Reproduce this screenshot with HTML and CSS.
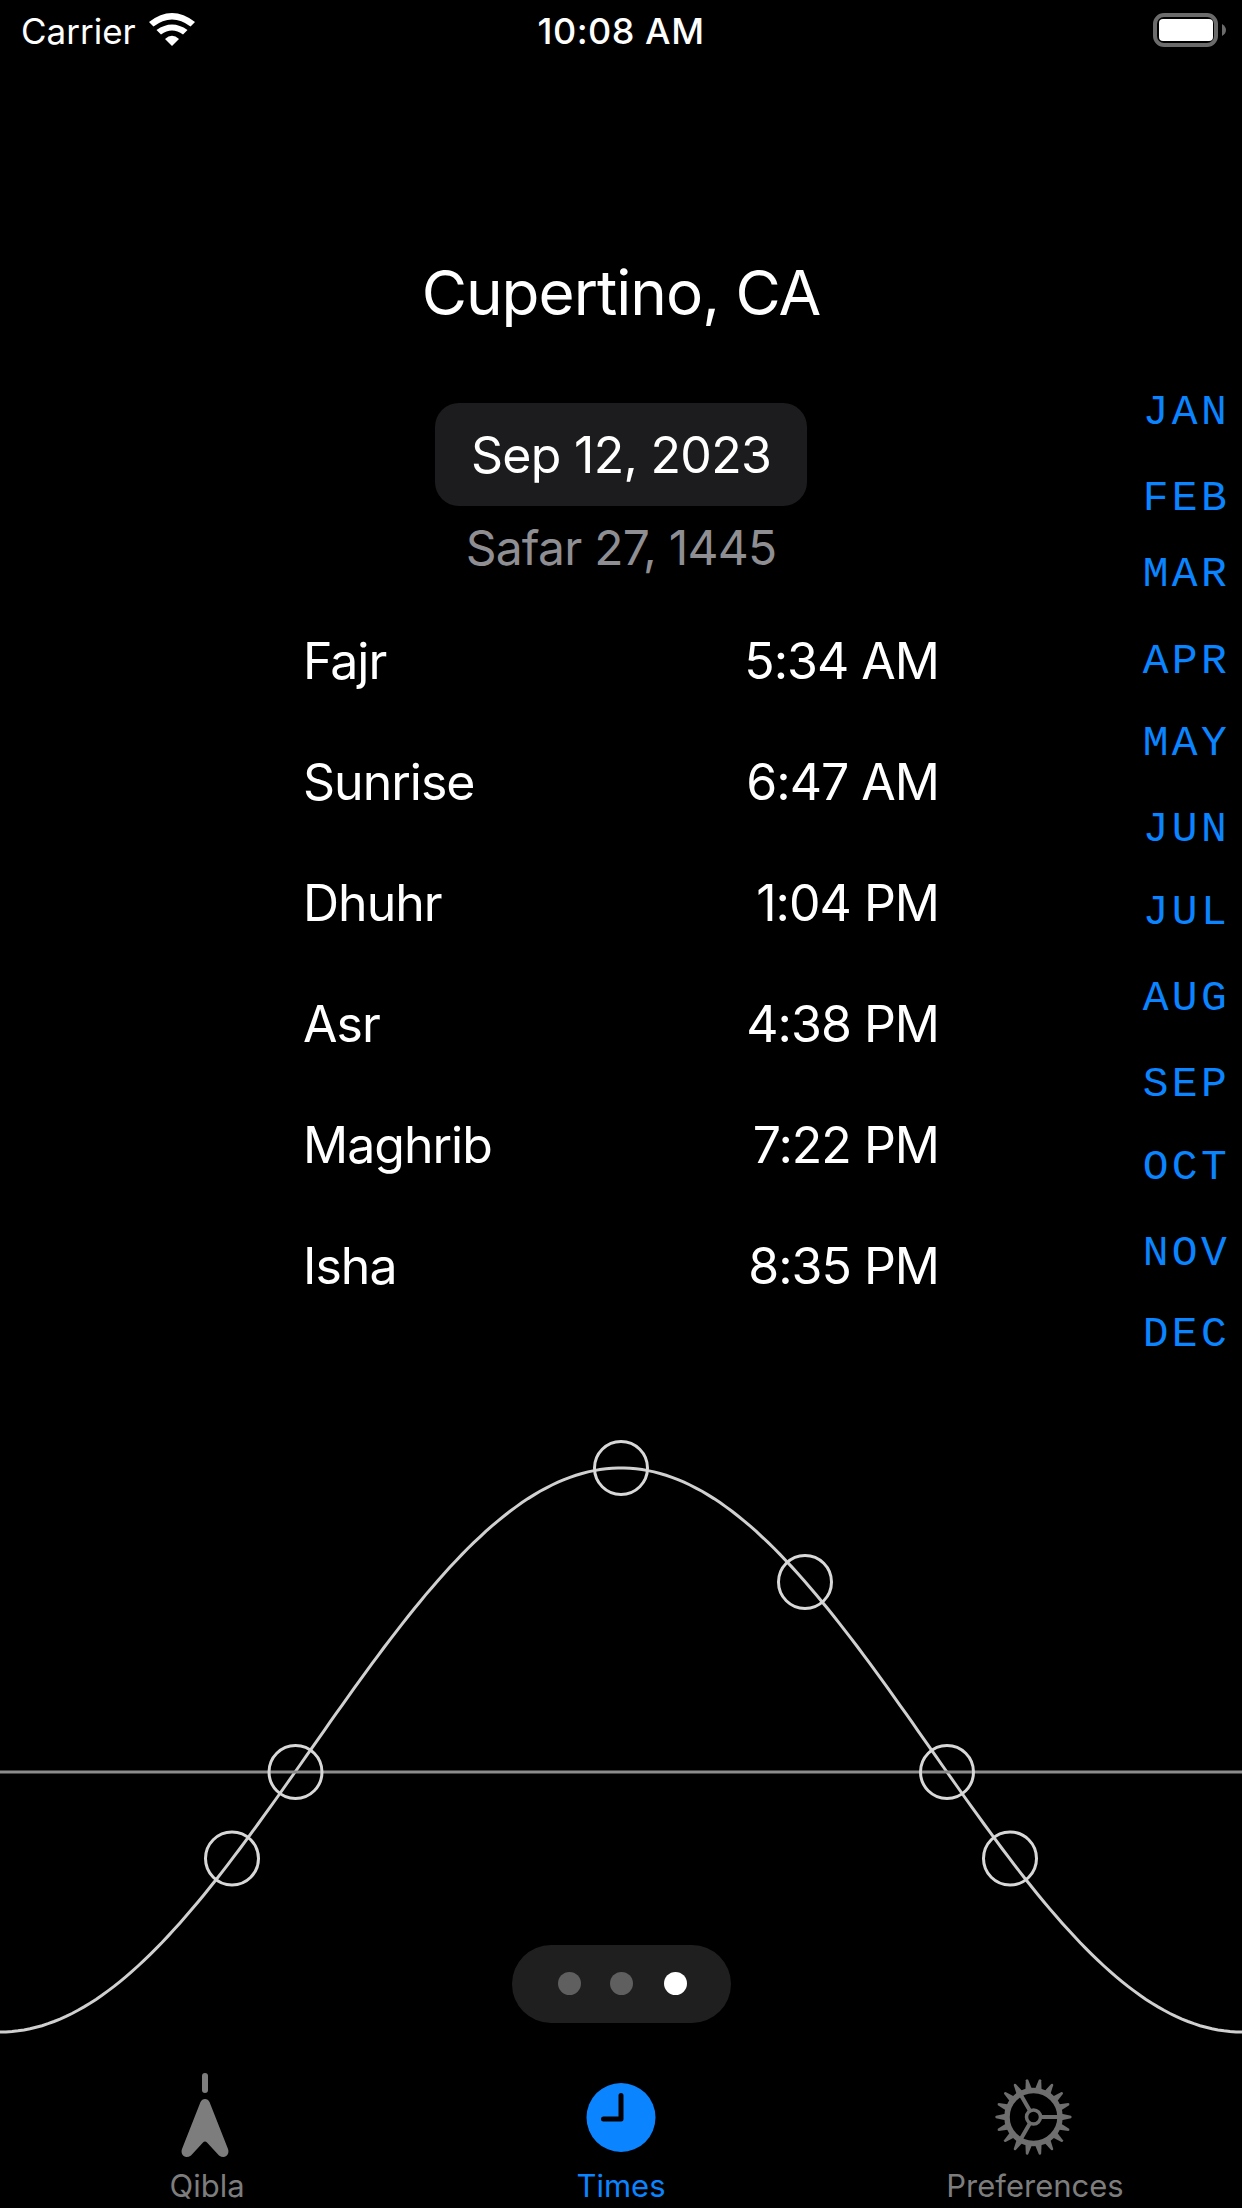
FILE: index.html
```html
<html>
	<head>
		<title>Times</title>
		<link rel="stylesheet" href="styles.css">
	</head>
	<body>
		<div id="screen">
			<div id="status">
				<div class="statusLeft">
					<span>Carrier</span>
					<svg class="statusIcon" width="46" height="34" viewBox="0 0 46 34">
						<path d="M0 9Q23 -9 46 9L41.5 13.5Q23 -0.5 4.5 13.5Z" fill="#fff"/>
						<path d="M7.5 17Q23 6 38.5 17L34 21.5Q23 13.5 12 21.5Z" fill="#fff"/>
						<path d="M16 26Q23 19.5 30 26L23 33Z" fill="#fff"/>
					</svg>
				</div>
				<div class="statusTime">10:08 AM</div>
				<div class="statusRight">
					<svg class="statusIcon" width="73" height="34" viewBox="0 0 73 34">
						<rect x="2" y="2" width="61" height="30" rx="9" fill="none" stroke="#6b6b6b" stroke-width="4"/>
						<rect x="6" y="6" width="54" height="22" rx="4" fill="#fff"/>
						<path d="M69 11C71.5 12.5 73 14.5 73 17S71.5 21.5 69 23Z" fill="#6b6b6b"/>
					</svg>
				</div>
			</div>

			<div id="title">Cupertino, CA</div>
			<div id="datePill">Sep 12, 2023</div>
			<div id="hijri">Safar 27, 1445</div>

			<div id="times">
				<div class="row"><span>Fajr</span><span>5:34 AM</span></div>
				<div class="row"><span>Sunrise</span><span>6:47 AM</span></div>
				<div class="row"><span>Dhuhr</span><span>1:04 PM</span></div>
				<div class="row"><span>Asr</span><span>4:38 PM</span></div>
				<div class="row"><span>Maghrib</span><span>7:22 PM</span></div>
				<div class="row"><span>Isha</span><span>8:35 PM</span></div>
			</div>

			<div id="months">
				<div>JAN</div>
				<div>FEB</div>
				<div>MAR</div>
				<div>APR</div>
				<div>MAY</div>
				<div>JUN</div>
				<div>JUL</div>
				<div>AUG</div>
				<div>SEP</div>
				<div>OCT</div>
				<div>NOV</div>
				<div>DEC</div>
			</div>

			<div id="chart">
				<svg width="1242" height="600" viewBox="0 0 1242 600">
					<path id="curve" class="curve" d=""/>
					<line class="horizon" x1="0" y1="332" x2="1242" y2="332"/>
					<circle class="sun" cx="232" cy="418.5" r="26.5"/>
					<circle class="sun" cx="295.5" cy="332" r="26.5"/>
					<circle class="sun" cx="621" cy="28" r="26.5"/>
					<circle class="sun" cx="805" cy="142" r="26.5"/>
					<circle class="sun" cx="947" cy="332" r="26.5"/>
					<circle class="sun" cx="1010" cy="418.5" r="26.5"/>
				</svg>
				<div id="pager">
					<span class="dot"></span>
					<span class="dot"></span>
					<span class="dot on"></span>
				</div>
			</div>

			<div id="tabs">
				<div class="tab">
					<svg class="qibla" width="60" height="94" viewBox="0 0 60 94">
						<rect x="27" y="0" width="6" height="20" rx="3" fill="#7d7d7d"/>
						<path d="M30 26C32 26 33.5 27 34.5 29L53 76C54.5 80 52 84 48.5 84C47 84 45.5 83.5 44 82.5L32 69.5C30.8 68.3 29.2 68.3 28 69.5L16 82.5C14.5 83.5 13 84 11.5 84C8 84 5.5 80 7 76L25.5 29C26.5 27 28 26 30 26Z" fill="#7d7d7d"/>
					</svg>
					<span>Qibla</span>
				</div>
				<div class="tab active">
					<svg width="72" height="94" viewBox="0 0 72 94">
						<circle cx="36" cy="44.5" r="34.5" fill="#0a84ff"/>
						<path d="M36 22.5V46H18.5" fill="none" stroke="#000" stroke-width="5" stroke-linecap="round" stroke-linejoin="round"/>
					</svg>
					<span>Times</span>
				</div>
				<div class="tab">
					<svg width="80" height="94" viewBox="0 0 80 94">
						<g id="teeth" fill="#6e6e6e"></g>
						<circle cx="38.5" cy="44" r="26.5" fill="none" stroke="#6e6e6e" stroke-width="5.5"/>
						<circle cx="38.5" cy="44" r="7" fill="none" stroke="#6e6e6e" stroke-width="3.5"/>
						<path d="M47 44H65M34.5 37.1L25 20.6M34.5 50.9L25 67.4" fill="none" stroke="#6e6e6e" stroke-width="4"/>
					</svg>
					<span>Preferences</span>
				</div>
			</div>
		</div>
		<script type='text/javascript'>
			// sun path over one day
			var d = "";
			for(var x = 0; x <= 1242; x += 6)
			{
				var y = 310 + 282 * Math.cos(2 * Math.PI * x / 1242);
				d += (x == 0 ? "M" : "L") + x + " " + y.toFixed(1);
			}
			curve.setAttribute("d", d);

			// gear teeth
			var t = "";
			for(var i = 0; i < 18; i++)
			{
				t += '<path d="M35 17L37.3 6.5Q38.5 5 39.7 6.5L42 17Z" transform="rotate(' + (i * 20 + 10) + ' 38.5 44)"/>';
			}
			teeth.innerHTML = t;
		</script>
	</body>
</html>
```

FILE: styles.css
```css
*{
	margin: 0;
	padding: 0;
	box-sizing: border-box;
}
body,html{
	width: 1242px;
	height: 2208px;
	background: #000;
	overflow: hidden;
	font-family: Inter, "Noto Sans", sans-serif;
	color: #fff;
}
#screen{
	position: relative;
	width: 1242px;
	height: 2208px;
	display: flex;
	flex-direction: column;
	align-items: center;
}

#status{
	width: 100%;
	height: 62px;
	padding: 0 16px;
	display: grid;
	grid-template-columns: 1fr auto 1fr;
	align-items: center;
	font-size: 35px;
}
.statusLeft{
	display: flex;
	align-items: center;
	gap: 13px;
	padding-left: 5px;
}
.statusIcon{
	margin-top: -3px;
}
.statusTime{
	font-size: 36px;
	font-weight: 500;
	letter-spacing: 0.5px;
}
.statusRight{
	display: flex;
	justify-content: flex-end;
}

#title{
	margin-top: 193px;
	font-size: 62px;
	line-height: 76px;
	letter-spacing: -1px;
	text-align: center;
}
#datePill{
	margin-top: 72px;
	width: 372px;
	height: 103px;
	border-radius: 24px;
	background: #1c1c1e;
	font-size: 50px;
	line-height: 104px;
	letter-spacing: -0.7px;
	text-align: center;
}
#hijri{
	margin-top: 13px;
	font-size: 48px;
	line-height: 58px;
	letter-spacing: -0.8px;
	text-align: center;
	color: #8e8e93;
}

#times{
	margin-top: 23px;
	width: 636px;
}
.row{
	height: 121px;
	display: flex;
	justify-content: space-between;
	align-items: center;
	font-size: 50px;
	letter-spacing: -1px;
}

#months{
	position: absolute;
	top: 387px;
	right: 12px;
	text-align: right;
	color: #0a84ff;
	font-family: "Liberation Mono", monospace;
	font-size: 43px;
	line-height: 52px;
	letter-spacing: 3.3px;
}
#months div{
	margin-bottom: 34px;
}
#months div:nth-child(2){
	margin-bottom: 24px;
}
#months div:nth-child(3){
	margin-bottom: 35px;
}
#months div:nth-child(4){
	margin-bottom: 30px;
}
#months div:nth-child(6),
#months div:nth-child(9){
	margin-bottom: 31px;
}
#months div:nth-child(11){
	margin-bottom: 29px;
}

#chart{
	position: absolute;
	top: 1440px;
	left: 0;
	width: 1242px;
	height: 600px;
}
.curve{
	fill: none;
	stroke: #d0d0d0;
	stroke-width: 3;
}
.horizon{
	stroke: #8c8c8c;
	stroke-width: 3;
}
.sun{
	fill: none;
	stroke: #d8d8d8;
	stroke-width: 3;
}
#pager{
	position: absolute;
	left: 512px;
	top: 505px;
	width: 219px;
	height: 78px;
	border-radius: 39px;
	background: #1f1f1f;
}
.dot{
	position: absolute;
	top: 27px;
	left: 46px;
	width: 23px;
	height: 23px;
	border-radius: 50%;
	background: #5f5f5f;
}
.dot:nth-child(2){
	left: 98px;
}
.dot.on{
	left: 152px;
	background: #fff;
}

#tabs{
	margin-top: auto;
	width: 100%;
	display: grid;
	grid-template-columns: 1fr 1fr 1fr;
	padding-bottom: 3px;
}
.tab{
	display: flex;
	flex-direction: column;
	align-items: center;
	color: #7d7d7d;
	font-size: 31px;
	line-height: 38px;
}
.tab.active{
	color: #0a84ff;
}
.qibla{
	margin-left: -4px;
}
```
